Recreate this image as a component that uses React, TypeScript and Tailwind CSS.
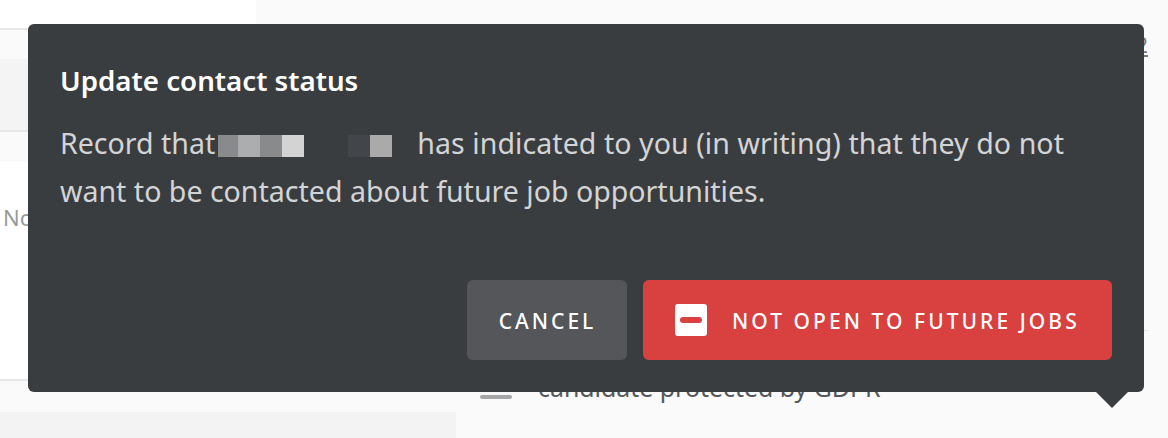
const font = '[font-family:"Noto_Sans",sans-serif]';

function Redacted() {
  return (
    <span className="ml-[3px] mr-[25px] inline-flex h-[22px] w-[174px] align-[-3px]">
      <span className="w-[20px] bg-[#888a8b]" />
      <span className="w-[22px] bg-[#abadae]" />
      <span className="w-[22px] bg-[#888a8b]" />
      <span className="w-[22px] bg-[#d3d3d4]" />
      <span className="w-[44px]" />
      <span className="w-[22px] bg-[#42464a]" />
      <span className="w-[22px] bg-[#aaaaab]" />
    </span>
  );
}

function MinusIcon() {
  return (
    <svg width="32" height="32" viewBox="0 0 32 32" className="shrink-0">
      <rect width="32" height="32" rx="3" fill="#ffffff" />
      <rect x="5" y="13" width="22" height="6" rx="3" fill="#d94040" />
    </svg>
  );
}

function UpdateStatusPopover() {
  return (
    <div className="absolute left-[28px] top-[24px] flex h-[368px] w-[1116px] flex-col rounded-[6px] bg-[#3a3d40] pl-[32px] pr-[32px] pt-[39px] pb-[32px]">
      <h2 className="text-[27.7px] font-semibold leading-[34px] text-white">Update contact status</h2>
      <p className="mt-[22px] text-[28.55px] leading-[48px] text-[#d3d4d5]">
        Record that
        <Redacted />
        <span className="tracking-[0.06px]">has indicated to you (in writing) that they do not</span>
        <br />
        want to be contacted about future job opportunities.
      </p>
      <div className="mt-auto flex justify-end gap-[16px]">
        <button className="flex h-[80px] w-[160px] items-center justify-center rounded-[6px] bg-[#555659] pl-[1px] pt-[4px] text-[21px] font-medium tracking-[3px] text-white">
          CANCEL
        </button>
        <button className="flex h-[80px] w-[469px] items-center gap-[25px] rounded-[6px] bg-[#d94040] pl-[32px] text-[21px] font-medium tracking-[3.05px] text-white">
          <MinusIcon />
          <span className="pt-[4px]">NOT OPEN TO FUTURE JOBS</span>
        </button>
      </div>
      <div className="absolute right-[16px] top-full h-0 w-0 border-x-[16px] border-t-[16px] border-x-transparent border-t-[#3a3d40]" />
    </div>
  );
}

export default function App() {
  return (
    <div className={`relative h-[438px] w-[1168px] overflow-hidden bg-[#fafafa] ${font}`}>
      <div className="flex h-[412px]">
        <div className="flex w-[256px] flex-col">
          <div className="h-[30px] shrink-0 border-b-2 border-[#e8e8e8] bg-white" />
          <div className="h-[29px] shrink-0 bg-[#fafafa]" />
          <div className="h-[73px] shrink-0 border-b-2 border-[#e8e8e8] bg-[#f4f4f4]" />
          <div className="h-[30px] shrink-0 bg-[#fafafa]" />
          <div className="h-[219px] shrink-0 border-b-2 border-[#e8e8e8] bg-white pl-[3px] pt-[41px] text-[22px] leading-[28px] text-[#9a9a9a]">
            No
          </div>
        </div>
        <div className="flex flex-1 flex-col pt-[33px]">
          <div className="flex justify-end pr-[20px] text-[22px] leading-[23px] text-[#77797b] underline">2</div>
          <div className="ml-[224px] mr-[20px] mt-[274px] h-[1px] bg-[#e8e8e8]" />
          <div className="ml-[224px] mt-[42px] flex items-start gap-[26px] text-[24.9px] leading-[28px] text-[#55585b]">
            <span className="mt-[22px] h-[4px] w-[32px] rounded-full bg-[#a5a6a7]" />
            candidate protected by GDPR
          </div>
        </div>
      </div>
      <div className="h-[26px] w-[456px] bg-[#f3f3f3]" />
      <UpdateStatusPopover />
    </div>
  );
}
